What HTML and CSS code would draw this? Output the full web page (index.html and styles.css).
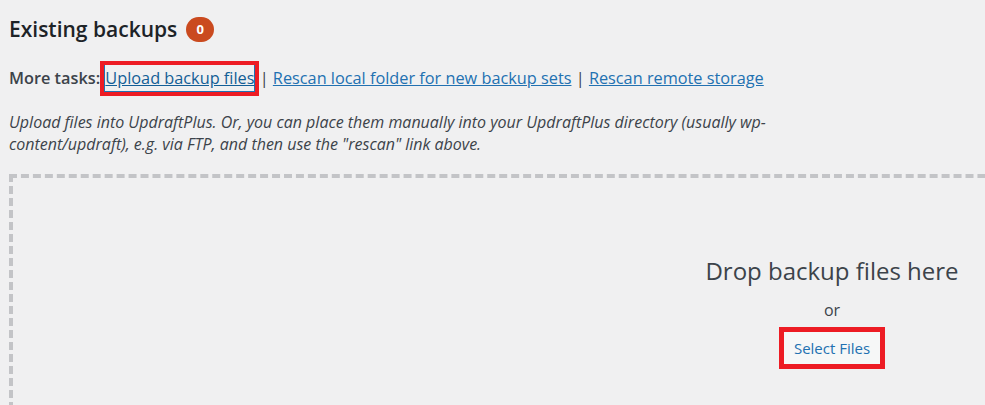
FILE: index.html
```html
<!DOCTYPE html>
<html lang="en">
<head>
<meta charset="utf-8">
<title>Existing backups</title>
<link rel="stylesheet" href="styles.css">
</head>
<body>
<div class="wrap">
  <h2 class="title">Existing backups <span class="badge">0</span></h2>
  <p class="tasks"><strong>More tasks:</strong> <a href="#" class="link link-focus">Upload backup files</a> | <a href="#" class="link">Rescan local folder for new backup sets</a> | <a href="#" class="link">Rescan remote storage</a></p>
  <p class="desc">Upload files into UpdraftPlus. Or, you can place them manually into your UpdraftPlus directory (usually wp-<br>content/updraft), e.g. via FTP, and then use the "rescan" link above.</p>
  <div class="dropzone">
    <div class="drop-inner">
      <p class="drop-title">Drop backup files here</p>
      <p class="drop-or">or</p>
      <button class="select-btn" type="button">Select Files</button>
    </div>
  </div>
</div>
</body>
</html>
```
FILE: styles.css
```css
html, body {
  margin: 0;
  padding: 0;
  background: #f0f0f1;
  overflow: hidden;
}
body {
  font-family: "Open Sans", "Noto Sans", "Liberation Sans", sans-serif;
  color: #3c434a;
  width: 985px;
  height: 405px;
}
.wrap {
  padding: 0 0 0 9px;
}
.title {
  margin: 0;
  padding-top: 13px;
  font-size: 21px;
  font-weight: 600;
  line-height: 32px;
  color: #1d2327;
  display: flex;
  align-items: center;
  gap: 9px;
}
.badge {
  display: inline-flex;
  align-items: center;
  justify-content: center;
  width: 28px;
  height: 25px;
  border-radius: 13px;
  background: #ca4a1f;
  color: #fff;
  font-size: 13px;
  font-weight: 700;
  line-height: 1;
}
.tasks {
  margin: 21px 0 0;
  font-size: 16.3px;
  line-height: 24px;
  color: #3c434a;
}
.tasks strong {
  font-weight: 600;
}
.link {
  color: #2271b1;
  text-decoration: underline;
}
.link-focus {
  color: #135e96;
  box-shadow: inset 1px 0 0 #2271b1, inset -1px 0 0 #2271b1, inset 0 -1px 0 #2271b1;
  outline: 4px solid #ed1c24;
  outline-offset: 0;
  padding: 2px 1px 3px;
}
.desc {
  margin: 21px 0 0;
  font-size: 16px;
  font-style: italic;
  line-height: 22px;
  color: #3c434a;
}
.dropzone {
  margin-top: 19px;
  width: 1646px;
  height: 320px;
  border: 4px dashed #c3c4c7;
  box-sizing: border-box;
}
.drop-inner {
  display: flex;
  flex-direction: column;
  align-items: center;
  padding-top: 77px;
}
.drop-title {
  margin: 0;
  font-size: 24px;
  line-height: 32px;
  color: #3c434a;
}
.drop-or {
  margin: 11px 0 0;
  font-size: 16px;
  line-height: 24px;
  color: #3c434a;
}
.select-btn {
  margin-top: 5px;
  font-family: inherit;
  font-size: 15px;
  line-height: 20px;
  color: #2271b1;
  background: #f6f7f7;
  border: 5px solid #ed1c24;
  padding: 6px 10px;
  border-radius: 0;
  cursor: pointer;
}
```
